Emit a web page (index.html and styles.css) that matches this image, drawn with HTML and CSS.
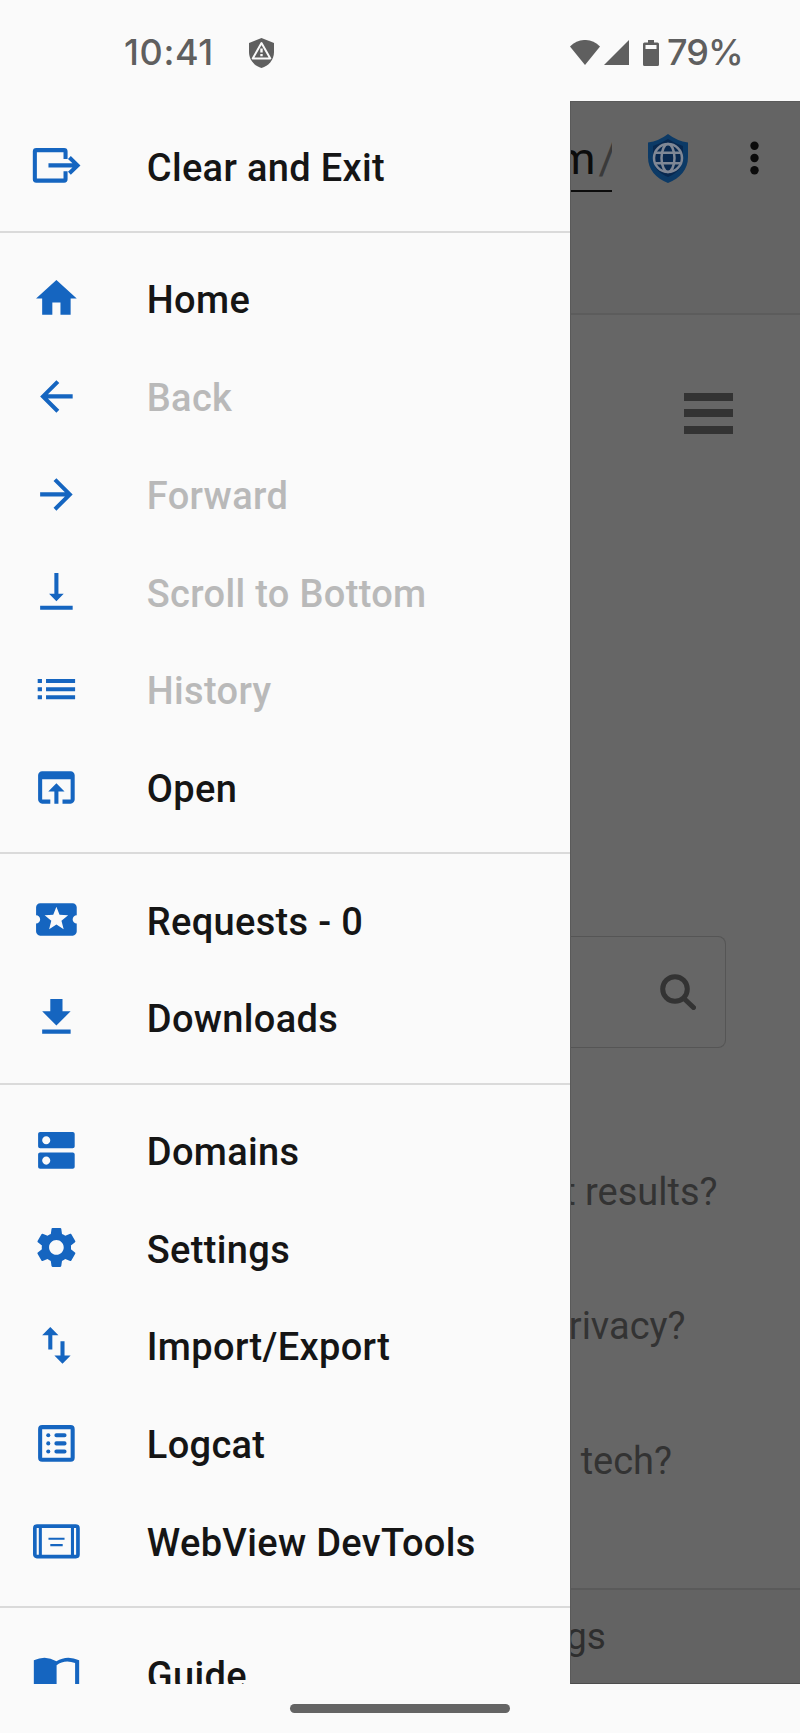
FILE: index.html
```html
<!DOCTYPE html>
<html lang="en">
<head>
<meta charset="utf-8">
<title>Browser menu</title>
<link rel="stylesheet" href="styles.css">
</head>
<body>
<header class="status">
  <span class="clock">10:41</span>
  <svg class="status-shield" viewBox="0 0 25 30"><path fill="#5f5f5f" d="M12.500 0L25 5V14C25 22 19.500 28 12.500 30C5.500 28 0 22 0 14V5Z"/><path fill="#5f5f5f" stroke="#fafafa" stroke-width="2" stroke-linejoin="round" d="M12.500 5L21.300 20.500H3.700Z"/><path fill="#fafafa" d="M11.300 10.500h2.400v4h-2.400zM11.300 16h2.400v2.200h-2.400z"/></svg>
  <svg class="wifi" viewBox="0 0 30 25"><path d="M15 25L0 6.500C8.500 -2.200 21.500 -2.200 30 6.500Z"/></svg>
  <svg class="signal" viewBox="0 0 25 25"><path d="M25 0V25H0Z"/></svg>
  <svg class="battery" viewBox="0 0 16 26"><path fill-rule="evenodd" d="M5 0h6v2.500h3.500q1.500 0 1.500 1.500v20.500q0 1.500 -1.500 1.500h-13q-1.500 0 -1.500 -1.500v-20.500q0 -1.500 1.500 -1.500H5zM2.500 5v4h11V5z"/></svg>
  <span class="percent">79%</span>
</header>
<main class="app">
  <nav class="drawer">
    <div class="group">
      <a class="item"><svg viewBox="0 0 24 24"><path class="line" d="M16.500 8.900V5.200Q16.500 4.500 15.800 4.500H2.100Q1.400 4.500 1.400 5.200V18.800Q1.400 19.500 2.100 19.500H15.800Q16.500 19.500 16.500 18.800V14.900M8.100 12H22.600M18.400 8.100L22.400 12L18.400 15.900"/></svg><span>Clear and Exit</span></a>
    </div>
    <div class="group">
      <a class="item"><svg viewBox="0 0 24 24"><path d="M10 20v-6h4v6h5v-8h3L12 3 2 12h3v8z"/></svg><span>Home</span></a>
      <a class="item off"><svg viewBox="0 0 24 24"><path d="M20 11H7.830l5.590-5.590L12 4l-8 8 8 8 1.410-1.410L7.830 13H20v-2z"/></svg><span>Back</span></a>
      <a class="item off"><svg viewBox="0 0 24 24"><path d="M12 4l-1.410 1.410L16.170 11H4v2h12.170l-5.580 5.590L12 20l8-8z"/></svg><span>Forward</span></a>
      <a class="item off"><svg viewBox="0 0 24 24"><path d="M15.600 13.200h-2.600V3h-2v10.200H8.400L12 16.800zM4 19v2h16v-2z"/></svg><span>Scroll to Bottom</span></a>
      <a class="item off"><svg viewBox="0 0 24 24"><path d="M2.800 16.900h2.100v-2H2.800zM2.800 12.900h2.100v-2H2.800zM2.800 8.900h2.100v-2H2.800zM6.900 16.900h14.300v-2H6.900zM6.900 12.900h14.300v-2H6.900zM6.900 6.900v2h14.300v-2z"/></svg><span>History</span></a>
      <a class="item"><svg viewBox="0 0 24 24"><path d="M19 4H5c-1.110 0-2 .9-2 2v12c0 1.100.89 2 2 2h4v-2H5V8h14v10h-4v2h4c1.100 0 2-.9 2-2V6c0-1.100-.89-2-2-2zm-7 6l-4 4h3v6h2v-6h3l-4-4z"/></svg><span>Open</span></a>
    </div>
    <div class="group">
      <a class="item"><svg viewBox="0 0 24 24"><path d="M20 12c0-1.100.9-2 2-2V6c0-1.100-.9-2-2-2H4c-1.100 0-1.990.9-1.990 2v4c1.100 0 1.990.9 1.990 2s-.89 2-2 2v4c0 1.100.9 2 2 2h16c1.100 0 2-.9 2-2v-4c-1.100 0-2-.9-2-2zm-4.420 4.800L12 14.500l-3.580 2.300 1.080-4.120-3.290-2.690 4.240-.25L12 5.800l1.540 3.950 4.240.25-3.290 2.690 1.090 4.110z"/></svg><span>Requests - 0</span></a>
      <a class="item"><svg viewBox="0 0 24 24"><path d="M19 9h-4V3H9v6H5l7 7 7-7zM5 18v2h14v-2H5z"/></svg><span>Downloads</span></a>
    </div>
    <div class="group">
      <a class="item"><svg viewBox="0 0 24 24"><path d="M20 13H4c-.55 0-1 .45-1 1v6c0 .55.45 1 1 1h16c.55 0 1-.45 1-1v-6c0-.55-.45-1-1-1zM7 19c-1.100 0-2-.9-2-2s.9-2 2-2 2 .9 2 2-.9 2-2 2zM20 3H4c-.55 0-1 .45-1 1v6c0 .55.45 1 1 1h16c.55 0 1-.45 1-1V4c0-.55-.45-1-1-1zM7 9c-1.100 0-2-.9-2-2s.9-2 2-2 2 .9 2 2-.9 2-2 2z"/></svg><span>Domains</span></a>
      <a class="item"><svg viewBox="0 0 24 24"><path fill-rule="evenodd" d="M19.140 12.940c.04-.3.06-.61.06-.94s-.02-.64-.07-.94l2.030-1.580c.18-.14.23-.41.120-.61l-1.920-3.320c-.12-.22-.37-.29-.59-.22l-2.390.96c-.5-.38-1.030-.7-1.620-.94l-.36-2.540c-.04-.24-.24-.41-.48-.41h-3.840c-.24 0-.43.170-.47.410l-.36 2.540c-.59.240-1.130.570-1.620.940l-2.390-.96c-.22-.08-.47 0-.59.220L2.740 8.870c-.12.210-.08.470.120.610l2.030 1.580c-.05.300-.09.630-.09.940s.02.640.070.940l-2.030 1.580c-.18.140-.23.410-.12.610l1.920 3.320c.12.220.37.290.59.220l2.390-.96c.5.380 1.030.7 1.620.94l.36 2.540c.05.240.24.410.48.410h3.840c.24 0 .44-.17.470-.41l.36-2.540c.59-.24 1.130-.56 1.620-.94l2.390.96c.22.080.470 0 .59-.22l1.920-3.320c.12-.22.070-.47-.12-.61l-2.010-1.580zM12 15.600c-1.980 0-3.600-1.620-3.600-3.600s1.620-3.600 3.600-3.600 3.600 1.620 3.600 3.600-1.620 3.600-3.600 3.600z"/></svg><span>Settings</span></a>
      <a class="item"><svg viewBox="0 0 24 24"><path d="M16 17.010V10h-2v7.010h-3L15 21l4-3.990h-3zM9 3L5 6.990h3V14h2V6.990h3L9 3z"/></svg><span>Import/Export</span></a>
      <a class="item"><svg viewBox="0 0 24 24"><rect class="line" x="4" y="4" width="16" height="16" rx="1"/><circle cx="8" cy="8" r="1"/><circle cx="8" cy="12" r="1"/><circle cx="8" cy="16" r="1"/><path class="line round" d="M12 8h4M12 12h4M12 16h4"/></svg><span>Logcat</span></a>
      <a class="item"><svg viewBox="0 0 24 24"><rect class="line frame" x="1.400" y="4.500" width="21.200" height="15" rx="1"/><path class="line rail" d="M4.100 4.500V19.500M19.900 4.500V19.500"/><path class="line rule" d="M8.100 10.700H16M9 13.800H15.100"/></svg><span>WebView DevTools</span></a>
    </div>
    <div class="group">
      <a class="item"><svg viewBox="0 0 24 24"><path fill-rule="evenodd" d="M.9 5.500Q6.800 2.800 12 6Q17.200 2.800 23.200 5.500V22H.9zM12.100 8V20H21.200V6.900Q16 5 12.100 8z"/></svg><span>Guide</span></a>
    </div>
  </nav>
  <section class="page">
    <div class="toolbar">
      <div class="url">m<i>/</i></div>
      <svg class="shield" viewBox="0 0 40 49"><path fill="#0c3a66" d="M20 0Q29 7 40 8.500V23C40 36 32 44 20 49C8 44 0 36 0 23V8.500Q11 7 20 0Z"/><path fill="#08284f" d="M20 5Q28 10 35 12V23C35 34 29 39 20 43C11 39 5 34 5 23V12Q12 10 20 5Z"/><g fill="none" stroke="#7f8795" stroke-width="2.500"><circle cx="20" cy="24" r="14"/><ellipse cx="20" cy="24" rx="6.500" ry="14"/><path d="M8 18.700H32M8 29.300H32"/></g></svg>
      <svg class="dots" viewBox="0 0 9 34"><circle cx="4.500" cy="4.700" r="4.200"/><circle cx="4.500" cy="17" r="4.200"/><circle cx="4.500" cy="29.300" r="4.200"/></svg>
    </div>
    <div class="burger"><b></b><b></b><b></b></div>
    <div class="search"><svg viewBox="0 0 36 36"><circle cx="15" cy="15" r="12.300"/><path d="M24.500 25L33.500 33.500"/></svg></div>
    <p class="q q1">t results?</p>
    <p class="q q2">rivacy?</p>
    <p class="q q3">tech?</p>
    <footer class="foot">gs</footer>
  </section>
</main>
<div class="navbar"><div class="handle"></div></div>
</body>
</html>
```

FILE: styles.css
```css
* { box-sizing: border-box; }
body {
  margin: 0;
  width: 800px;
  height: 1733px;
  overflow: hidden;
  background: #fafafa;
  font-family: Roboto, "Liberation Sans", sans-serif;
}
svg { display: block; flex: none; }

/* Status bar */
.status {
  display: flex;
  height: 101px;
  padding-left: 124px;
  color: #5f5f5f;
  fill: #5f5f5f;
  font: 500 36px/42px Inter, Roboto, sans-serif;
}
.clock { width: 125px; padding-top: 31px; letter-spacing: .6px; }
.status-shield { width: 25px; height: 30px; margin-top: 38px; }
.wifi { width: 30px; height: 25px; margin: 39.5px 0 0 296px; }
.signal { width: 25px; height: 25px; margin: 39.5px 0 0 3.5px; }
.battery { width: 16px; height: 26px; margin: 40px 0 0 14.5px; }
.percent { padding: 31px 0 0 8px; letter-spacing: -1px; }

/* Drawer beside the dimmed page */
.app { display: flex; height: 1583px; }
.drawer { width: 570px; flex: none; overflow: hidden; }
.group { padding: 16.4px 0; }
.group + .group { border-top: 2px solid #dadada; }
.group:first-child { padding-top: 16px; }
.item {
  display: flex;
  align-items: center;
  height: 97.75px;
  padding-left: 32.2px;
  gap: 65.8px;
  color: #151515;
  font-size: 38px;
  font-weight: 500;
  line-height: 44px;
  letter-spacing: .33px;
}
.item svg { width: 48.8px; height: 48.8px; fill: #1565c0; }
.item span { padding-top: 4px; white-space: nowrap; }
.off { color: #b9b9b9; }
.item svg .line { fill: none; stroke: #1565c0; stroke-width: 2; }
.item svg .round { stroke-linecap: round; }
.item svg .frame { stroke-width: 1.800; }
.item svg .rail { stroke-width: 1.500; }
.item svg .rule { stroke-width: 1.100; }

.page {
  flex: 1;
  overflow: hidden;
  display: flex;
  flex-direction: column;
  background: #666;
  border-top: 1px solid #5a5a5a;
  border-left: 1px solid #5a5a5a;
  border-bottom: 1px solid #4c4c4c;
}
.toolbar {
  display: flex;
  flex: none;
  height: 213px;
  background: #646464;
  border-bottom: 2px solid #5c5c5c;
}
.url {
  width: 40.5px;
  height: 70px;
  margin-top: 20px;
  padding-top: 10px;
  border-bottom: 2.500px solid #0c0c0c;
  overflow: hidden;
  color: #0c0c0c;
  font-size: 45px;
  line-height: 53px;
  letter-spacing: 3px;
  white-space: nowrap;
  text-indent: -15px;
}
.url i { font-style: normal; color: #3a3a3a; }
.shield { width: 40px; height: 49px; margin: 31.5px 0 0 36.5px; }
.dots { width: 9px; height: 34px; margin: 38.5px 0 0 61.5px; fill: #0b0b0b; }
.burger {
  display: grid;
  gap: 8.3px;
  width: 49px;
  margin: 78px 0 0 112.5px;
}
.burger b { height: 8px; background: #333; }
.search {
  flex: none;
  display: flex;
  justify-content: flex-end;
  height: 112px;
  width: 155px;
  margin-top: 502px;
  padding: 37.5px 29.5px 0 0;
  border: 1.500px solid #555;
  border-left: 0;
  border-radius: 0 8px 8px 0;
}
.search svg { width: 36px; height: 36px; fill: none; stroke: #333; stroke-width: 5; stroke-linecap: round; }
.q {
  margin: 0;
  flex: none;
  display: flex;
  justify-content: flex-end;
  width: 146.5px;
  color: #333;
  font-size: 38px;
  line-height: 44px;
  white-space: pre;
}
.q1 { margin-top: 122px; }
.q2 { margin-top: 90.5px; width: 114.5px; }
.q3 { margin-top: 90.5px; width: 101px; }
.foot {
  display: flex;
  align-items: flex-start;
  flex: 1;
  margin-top: 105px;
  padding-top: 25px;
  background: #636363;
  border-top: 2px solid #5a5a5a;
  color: #2e2e2e;
  font-size: 37px;
  line-height: 44px;
  text-indent: -5px;
}

.navbar { display: flex; justify-content: center; height: 49px; padding-top: 20px; }
.handle { width: 220px; height: 9px; border-radius: 5px; background: #646464; }
```
